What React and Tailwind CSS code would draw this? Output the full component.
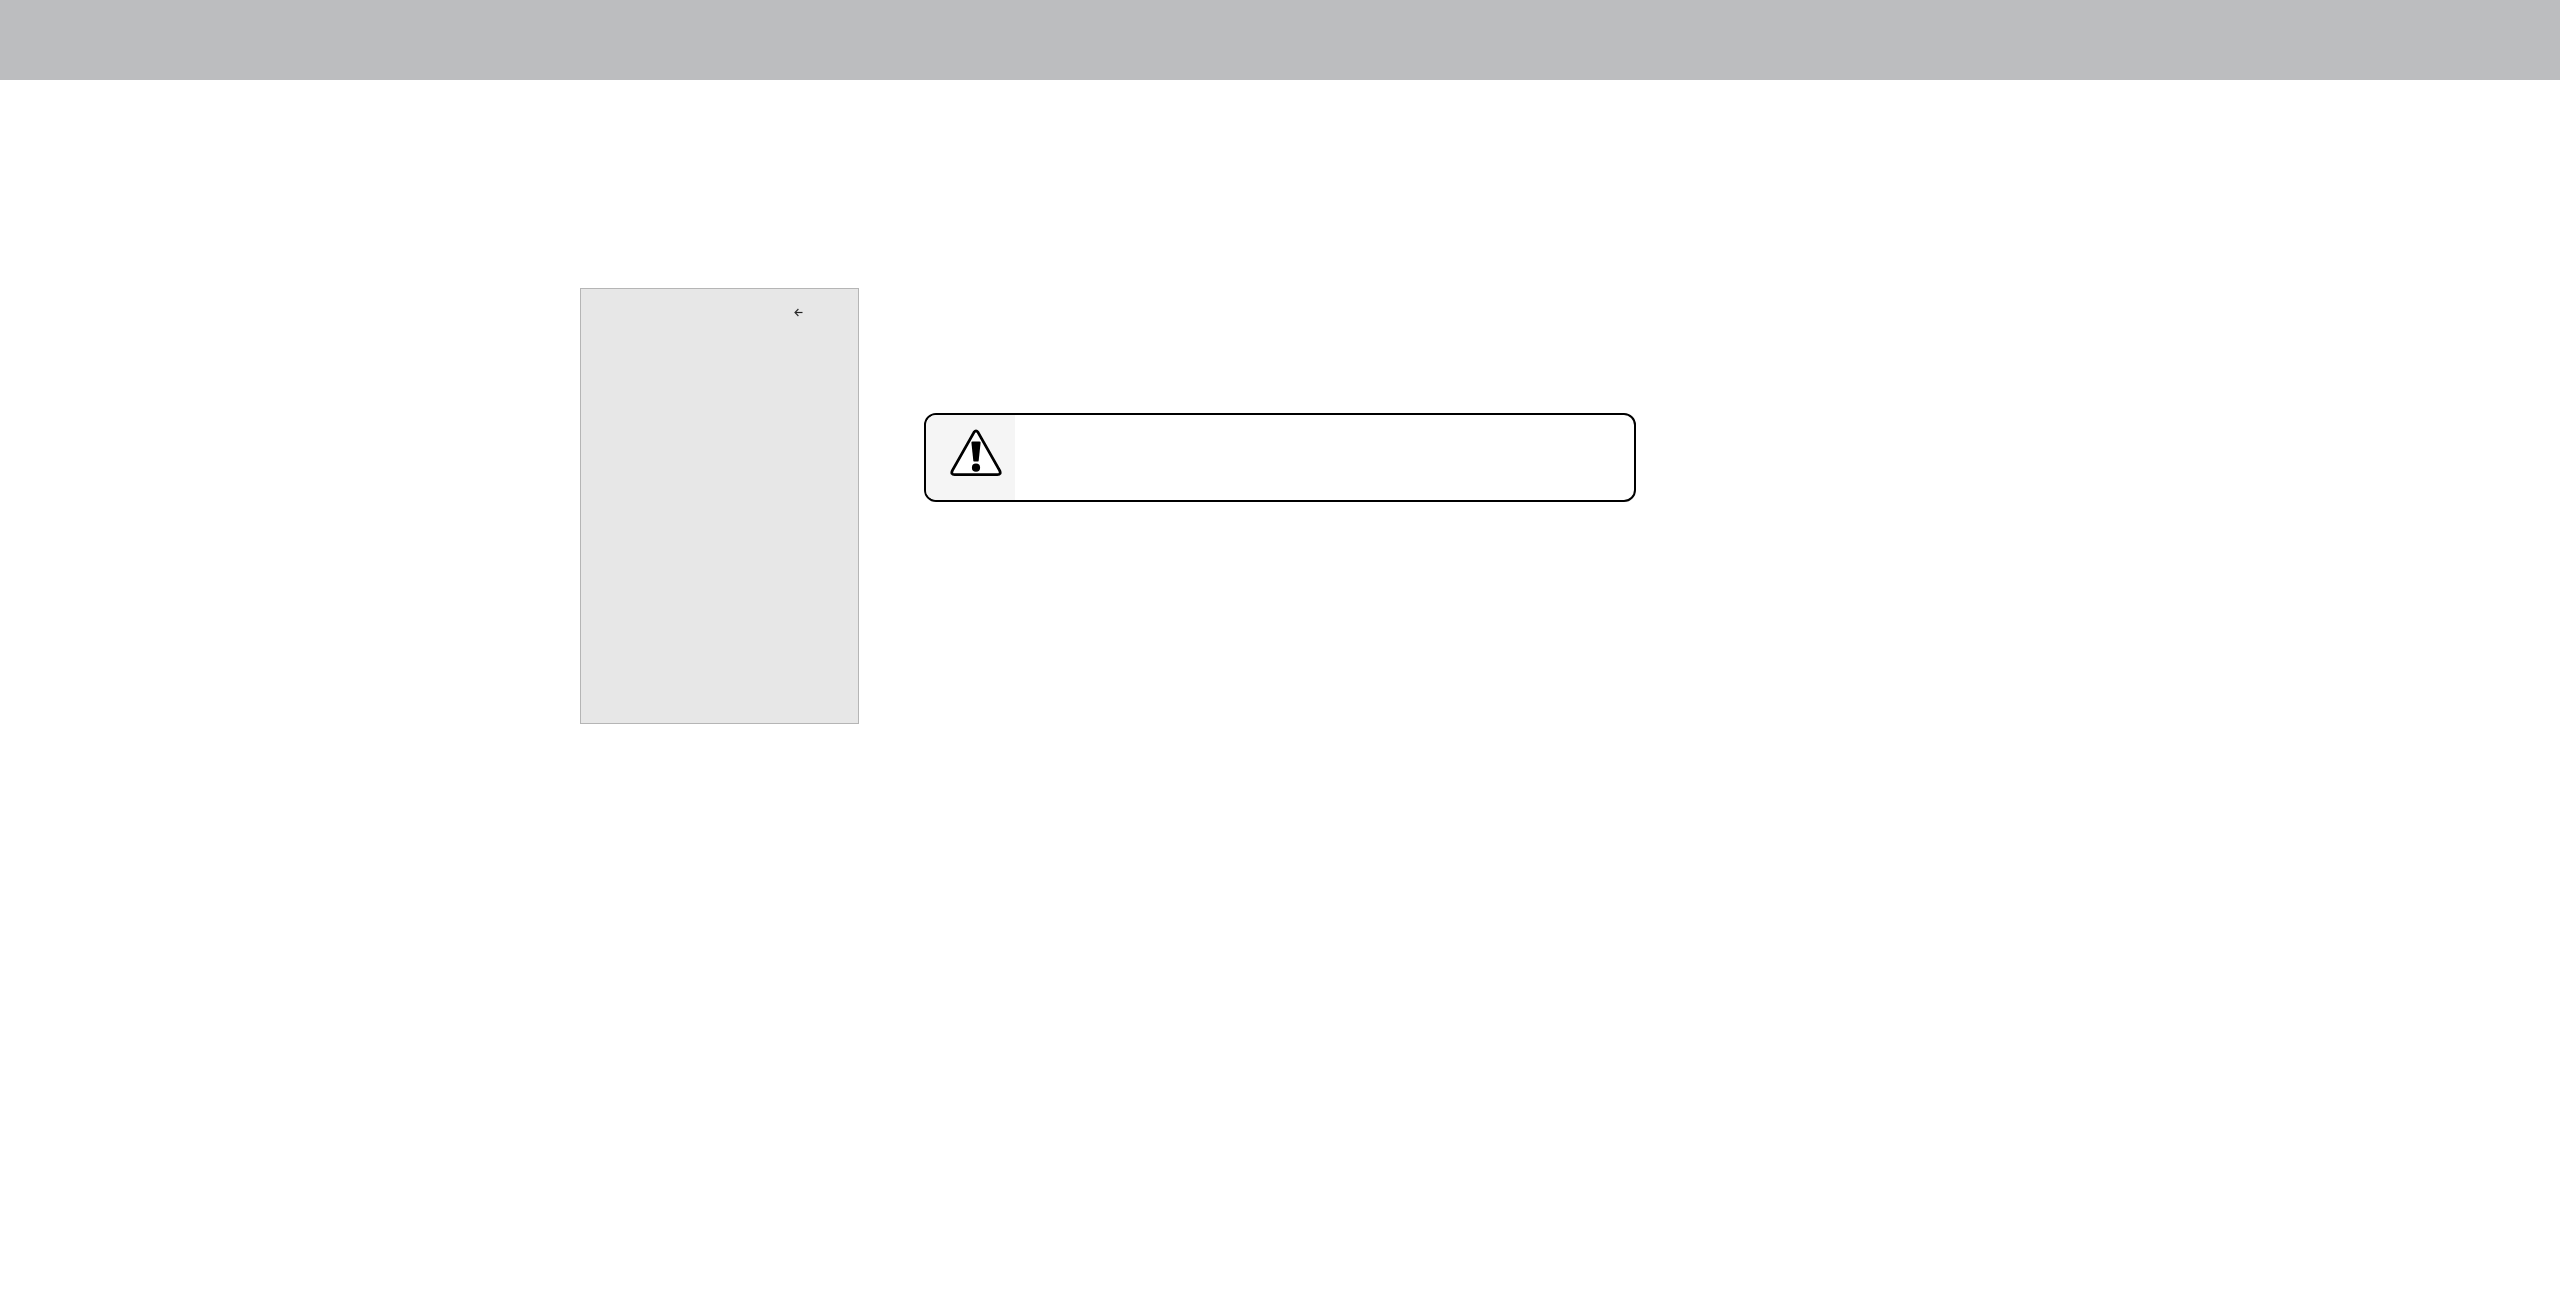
import React from 'react';

const WarningIcon = () => (
  <svg width="52" height="48" viewBox="0 0 52 48" className="block">
    <path
      d="M24.1 3.1 Q26 0.6 27.9 3.1 L49.7 41.6 Q51.4 45.7 47.4 45.7 H4.6 Q0.6 45.7 2.3 41.6 Z"
      fill="#fff"
      stroke="#000"
      strokeWidth="2.8"
      strokeLinejoin="round"
    />
    <path d="M21.4 13.8 Q21.4 12.6 22.6 12.6 H29.4 Q30.6 12.6 30.6 13.8 L28.7 31.4 Q28.5 32.6 27.5 32.6 H24.5 Q23.5 32.6 23.3 31.4 Z" fill="#000" />
    <circle cx="26" cy="38.7" r="4.1" fill="#000" />
  </svg>
);

const BackArrow = () => (
  <svg width="9" height="9" viewBox="0 0 9 9" className="block">
    <path d="M8.5 4.5 H1" fill="none" stroke="#222" strokeWidth="1.2" />
    <path d="M4.4 1 L1 4.5 L4.4 8" fill="none" stroke="#333" strokeWidth="1.2" />
  </svg>
);

const App = () => {
  return (
    <div className="h-[1308px] w-[2560px] overflow-hidden bg-white">
      <header className="h-20 bg-[#bcbdbf]" />
      <main className="flex items-start pt-[208px] pl-[580px]">
        <aside className="flex h-[436px] w-[279px] justify-end border border-[#b5b5b5] bg-[#e7e7e7] pt-[19px] pr-[55px]">
          <BackArrow />
        </aside>
        <section className="mt-[125px] ml-[65px] flex h-[89px] w-[712px] overflow-hidden rounded-xl border-2 border-black bg-white">
          <div className="w-[89px] bg-[#f5f5f5] pt-[14px] pl-6">
            <WarningIcon />
          </div>
        </section>
      </main>
    </div>
  );
};

export default App;
